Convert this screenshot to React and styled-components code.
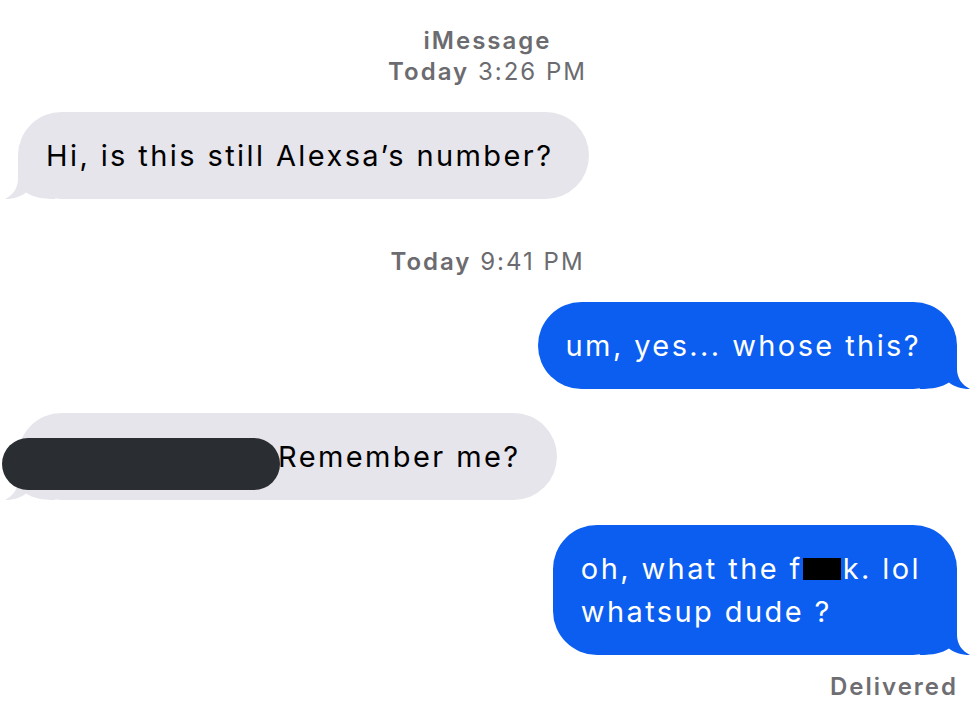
import React from "react";
import styled, { createGlobalStyle } from "styled-components";

const GlobalStyle = createGlobalStyle`
  html, body { margin: 0; padding: 0; background: #ffffff; }
  body { font-family: Inter, "Noto Sans", "Liberation Sans", sans-serif; -webkit-font-smoothing: antialiased; }
`;

const Page = styled.div`
  width: 980px;
  height: 710px;
  box-sizing: border-box;
  padding: 25px 23px 0 18px;
  display: flex;
  flex-direction: column;
  overflow: hidden;
`;

const Stamp = styled.div`
  display: flex;
  flex-direction: column;
  align-items: center;
  color: #6b6b70;
  font-size: 24px;
  line-height: 31px;
  letter-spacing: 2px;
  margin-top: ${(p) => p.$top || 0}px;
  margin-bottom: ${(p) => p.$bottom || 0}px;
`;

const Strong = styled.span`
  font-weight: 600;
`;

const Row = styled.div`
  display: flex;
  justify-content: ${(p) => (p.$out ? "flex-end" : "flex-start")};
  margin-bottom: ${(p) => p.$gap || 0}px;
`;

const Bubble = styled.div`
  position: relative;
  isolation: isolate;
  box-sizing: border-box;
  padding: 22px 36px 22px 28px;
  border-radius: 44px;
  font-size: 29px;
  line-height: 43px;
  letter-spacing: 2.4px;
  background: ${(p) => (p.$out ? "#0b5ef0" : "#e6e5eb")};
  color: ${(p) => (p.$out ? "#ffffff" : "#000000")};
  white-space: nowrap;
`;

const Tail = styled.svg`
  position: absolute;
  z-index: -1;
  bottom: 0;
  width: 50px;
  height: 44px;
  ${(p) =>
    p.$out
      ? "right: -13px; transform: scaleX(-1);"
      : "left: -13px;"}
`;

const Redacted = styled.span`
  display: inline-block;
  vertical-align: top;
  width: 278px;
  height: 52px;
  margin: 3px -2px -12px -44px;
  border-radius: 26px;
  background: #2a2e33;
`;

const Censor = styled.span`
  display: inline-block;
  width: 38px;
  height: 22px;
  margin-right: 2px;
  background: #000000;
  vertical-align: -1px;
`;

const Status = styled.div`
  align-self: flex-end;
  margin-top: 16px;
  margin-right: -1px;
  color: #6e6e72;
  font-size: 24px;
  font-weight: 600;
  line-height: 31px;
  letter-spacing: 2px;
`;

function BubbleTail({ out }) {
  return (
    <Tail $out={out} viewBox="0 0 50 44" aria-hidden="true">
      <path
        d="M13 0 L13 24 C13 33 8 40 0 44 C9 44 16 41.5 21 37.5 C28 42 37 44 50 44 L50 0 Z"
        fill={out ? "#0b5ef0" : "#e6e5eb"}
      />
    </Tail>
  );
}

function Message({ out, children, gap }) {
  return (
    <Row $out={out} $gap={gap}>
      <Bubble $out={out}>
        <BubbleTail out={out} />
        {children}
      </Bubble>
    </Row>
  );
}

export default function App() {
  return (
    <>
      <GlobalStyle />
      <Page>
        <Stamp $bottom={25}>
          <Strong>iMessage</Strong>
          <span>
            <Strong>Today</Strong> 3:26 PM
          </span>
        </Stamp>
        <Message gap={0}>Hi, is this still Alexsa’s number?</Message>
        <Stamp $top={47} $bottom={25}>
          <span>
            <Strong>Today</Strong> 9:41 PM
          </span>
        </Stamp>
        <Message out gap={24}>um, yes... whose this?</Message>
        <Message gap={25}>
          <Redacted />
          Remember me?
        </Message>
        <Message out>
          oh, what the f<Censor />k. lol
          <br />
          whatsup dude ?
        </Message>
        <Status>Delivered</Status>
      </Page>
    </>
  );
}
